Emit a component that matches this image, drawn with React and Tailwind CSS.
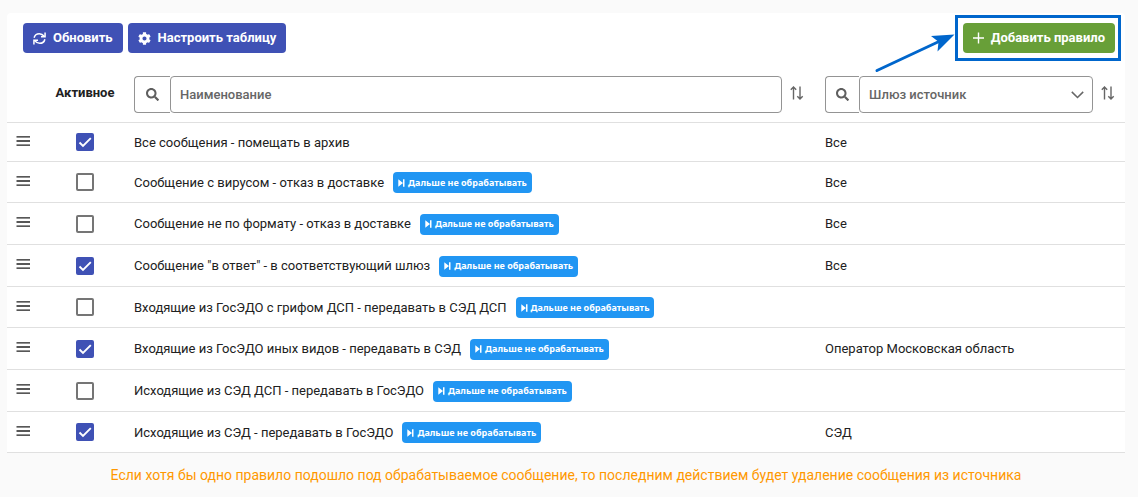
import React, { useState } from 'react';
import clsx from 'clsx';
import { FaCog, FaSearch } from 'react-icons/fa';

const initialRules = [
  { id: 1, active: true, name: 'Все сообщения - помещать в архив', source: 'Все', stop: false },
  { id: 2, active: false, name: 'Сообщение с вирусом - отказ в доставке', source: 'Все', stop: true },
  { id: 3, active: false, name: 'Сообщение не по формату - отказ в доставке', source: 'Все', stop: true },
  { id: 4, active: true, name: 'Сообщение "в ответ" - в соответствующий шлюз', source: 'Все', stop: true },
  { id: 5, active: false, name: 'Входящие из ГосЭДО с грифом ДСП - передавать в СЭД ДСП', source: '', stop: true },
  { id: 6, active: true, name: 'Входящие из ГосЭДО иных видов - передавать в СЭД', source: 'Оператор Московская область', stop: true },
  { id: 7, active: false, name: 'Исходящие из СЭД ДСП - передавать в ГосЭДО', source: '', stop: true },
  { id: 8, active: true, name: 'Исходящие из СЭД - передавать в ГосЭДО', source: 'СЭД', stop: true },
];

function RefreshIcon() {
  return (
    <svg width="13" height="13" viewBox="0 0 14 14" fill="none" stroke="currentColor" strokeWidth="1.6">
      <path d="M1.2 6.2C1.8 3.4 4 1.8 6.8 1.8C9.2 1.8 10.8 3 12.4 4.8" />
      <path d="M13 0.6V5.2H8.6" />
      <path d="M12.8 7.8C12.2 10.6 10 12.2 7.2 12.2C4.8 12.2 3.2 11 1.6 9.2" />
      <path d="M1 13.4V8.8H5.4" />
    </svg>
  );
}

function SortIcon() {
  return (
    <svg width="14" height="14" viewBox="0 0 14 14" fill="none" stroke="currentColor" strokeWidth="1.4">
      <path d="M3.5 13.5V1.2M0.8 3.8L3.5 1L6.2 3.8" />
      <path d="M10 0.5V12.8M7.3 10.2L10 13L12.7 10.2" />
    </svg>
  );
}

function BarsIcon() {
  return (
    <svg width="14" height="10" viewBox="0 0 14 10" fill="currentColor">
      <path d="M0.5 0.2h13.5v1.4h-13.5zM0.5 4.2h13.5v1.5h-13.5zM0.5 8.4h13.5v1.4h-13.5z" />
    </svg>
  );
}

function StopBadge() {
  return (
    <span className="inline-flex h-[21px] items-center gap-[3px] rounded bg-[#2196f3] px-[5px] font-['Noto_Sans',sans-serif] text-[9px] font-bold text-white">
      <svg width="7" height="8" viewBox="0 0 7 8" fill="currentColor">
        <path d="M0.3 0.3L5 4L0.3 7.7zM5 0.3h1.5v7.4h-1.5z" />
      </svg>
      Дальше не обрабатывать
    </span>
  );
}

function SortButton({ label }) {
  return (
    <button type="button" aria-label={label} className="mb-1 shrink-0 text-[#666]">
      <SortIcon />
    </button>
  );
}

function SearchAddon({ className }) {
  return (
    <span
      className={clsx(
        'flex h-[37px] shrink-0 items-center justify-center rounded-l border border-r-0 border-[#949494] text-[#5f5f5f]',
        className
      )}
    >
      <FaSearch size={13} />
    </span>
  );
}

function ActiveCheckbox({ checked, label, onChange }) {
  return (
    <span className="relative inline-flex size-[18px] align-middle">
      <input
        type="checkbox"
        checked={checked}
        onChange={onChange}
        aria-label={label}
        className="size-[18px] appearance-none rounded-xs border-2 border-[#757575] bg-white checked:border-[#3f51b5] checked:bg-[#3f51b5]"
      />
      {checked && (
        <svg
          className="pointer-events-none absolute inset-0"
          width="18"
          height="18"
          viewBox="0 0 18 18"
          fill="none"
          stroke="white"
          strokeWidth="1.9"
        >
          <path d="M3.5 9.5L7 13L14.8 5.2" />
        </svg>
      )}
    </span>
  );
}

function App() {
  const [rules, setRules] = useState(initialRules);
  const [name, setName] = useState('');
  const [source, setSource] = useState('');

  const toggleRule = (id) => {
    setRules(rules.map((rule) => (rule.id === id ? { ...rule, active: !rule.active } : rule)));
  };

  const buttonClass = 'flex h-[30px] items-center gap-[7px] rounded px-[10px] text-[13px] font-bold text-white';

  return (
    <div className="min-h-screen bg-[#fafafa] pt-[13px] pr-[13px] pb-3 pl-[7px] font-[Roboto,sans-serif] text-[13px] text-[#212121]">
      <div className="rounded-t bg-white">
        <div className="flex items-center gap-[5px] pt-[10px] pr-[10px] pb-[13px] pl-4">
          <button type="button" className={clsx(buttonClass, 'bg-[#3f51b5]')}>
            <RefreshIcon />
            Обновить
          </button>
          <button type="button" className={clsx(buttonClass, 'bg-[#3f51b5]')}>
            <FaCog size={13} />
            Настроить таблицу
          </button>

          <div className="relative ml-auto">
            <button type="button" className={clsx(buttonClass, 'bg-[#689f38]')}>
              <svg width="11" height="12" viewBox="0 0 11 12" stroke="currentColor" strokeWidth="1.4">
                <path d="M5.5 0.5V11.5M0 6H11" />
              </svg>
              Добавить правило
            </button>
            {/* Highlight frame with a pointer */}
            <div className="pointer-events-none absolute -top-2 -right-[6px] -bottom-2 -left-2 border-3 border-[#0066cc]" />
            <svg
              className="pointer-events-none absolute top-2 right-full mr-2"
              width="82"
              height="42"
              viewBox="0 0 82 42"
            >
              <path d="M4 39.5L66 10.5" stroke="#0066cc" strokeWidth="3" strokeLinecap="round" />
              <path d="M81.5 3.5L58 5L65.5 10.8L64.5 20.5Z" fill="#0066cc" />
            </svg>
          </div>
        </div>

        <table className="w-full table-fixed border-collapse">
          <colgroup>
            <col className="w-[37px]" />
            <col className="w-[82px]" />
            <col />
            <col className="w-[308px]" />
          </colgroup>
          <thead>
            <tr className="h-[56px] border-b border-[#e0e0e0]">
              <td />
              <th scope="col" className="pb-[2px] text-center font-bold">Активное</th>
              <th scope="col" className="pt-[2px] pr-[13px] pl-2 text-left">
                <div className="flex items-center gap-2">
                  <div className="flex grow">
                    <SearchAddon className="w-9" />
                    <input
                      type="text"
                      value={name}
                      onChange={(e) => setName(e.target.value)}
                      placeholder="Наименование"
                      aria-label="Наименование"
                      className="h-[37px] min-w-0 grow rounded border border-[#949494] px-[9px] font-medium placeholder:text-[#666]"
                    />
                  </div>
                  <SortButton label="Сортировать по наименованию" />
                </div>
              </th>
              <th scope="col" className="pt-[2px] pr-[10px] pl-2 text-left">
                <div className="flex items-center gap-2">
                  <div className="flex grow">
                    <SearchAddon className="w-[34px]" />
                    <div className="relative grow">
                      <select
                        value={source}
                        onChange={(e) => setSource(e.target.value)}
                        aria-label="Шлюз источник"
                        className="block h-[37px] w-full appearance-none rounded border border-[#949494] px-[9px] font-medium text-[#666]"
                      >
                        <option value="">Шлюз источник</option>
                        <option value="all">Все</option>
                        <option value="sed">СЭД</option>
                      </select>
                      <svg
                        className="pointer-events-none absolute top-[15px] right-[9px]"
                        width="13"
                        height="8"
                        viewBox="0 0 13 8"
                        fill="none"
                        stroke="#666"
                        strokeWidth="1.5"
                      >
                        <path d="M0.8 0.9L6.5 6.5L12.2 0.9" />
                      </svg>
                    </div>
                  </div>
                  <SortButton label="Сортировать по шлюзу" />
                </div>
              </th>
            </tr>
          </thead>
          <tbody>
            {rules.map((rule) => (
              <tr
                key={rule.id}
                className="h-[42px] border-b border-[#e0e0e0] first:h-[39px] nth-[3n+2]:h-[41px]"
              >
                <td className="pb-[2px] pl-[9px]">
                  <BarsIcon />
                </td>
                <td className="text-center">
                  <ActiveCheckbox
                    checked={rule.active}
                    label={rule.name}
                    onChange={() => toggleRule(rule.id)}
                  />
                </td>
                <td className="px-2 pt-[2px]">
                  <div className="flex items-center gap-[9px]">
                    {rule.name}
                    {rule.stop && <StopBadge />}
                  </div>
                </td>
                <td className="px-2 pt-[2px]">{rule.source}</td>
              </tr>
            ))}
          </tbody>
        </table>
      </div>

      <p className="pt-[11px] text-center text-[14px] leading-[22px] text-[#ff9800]">
        Если хотя бы одно правило подошло под обрабатываемое сообщение, то последним действием будет удаление сообщения из источника
      </p>
    </div>
  );
}

export default App;
